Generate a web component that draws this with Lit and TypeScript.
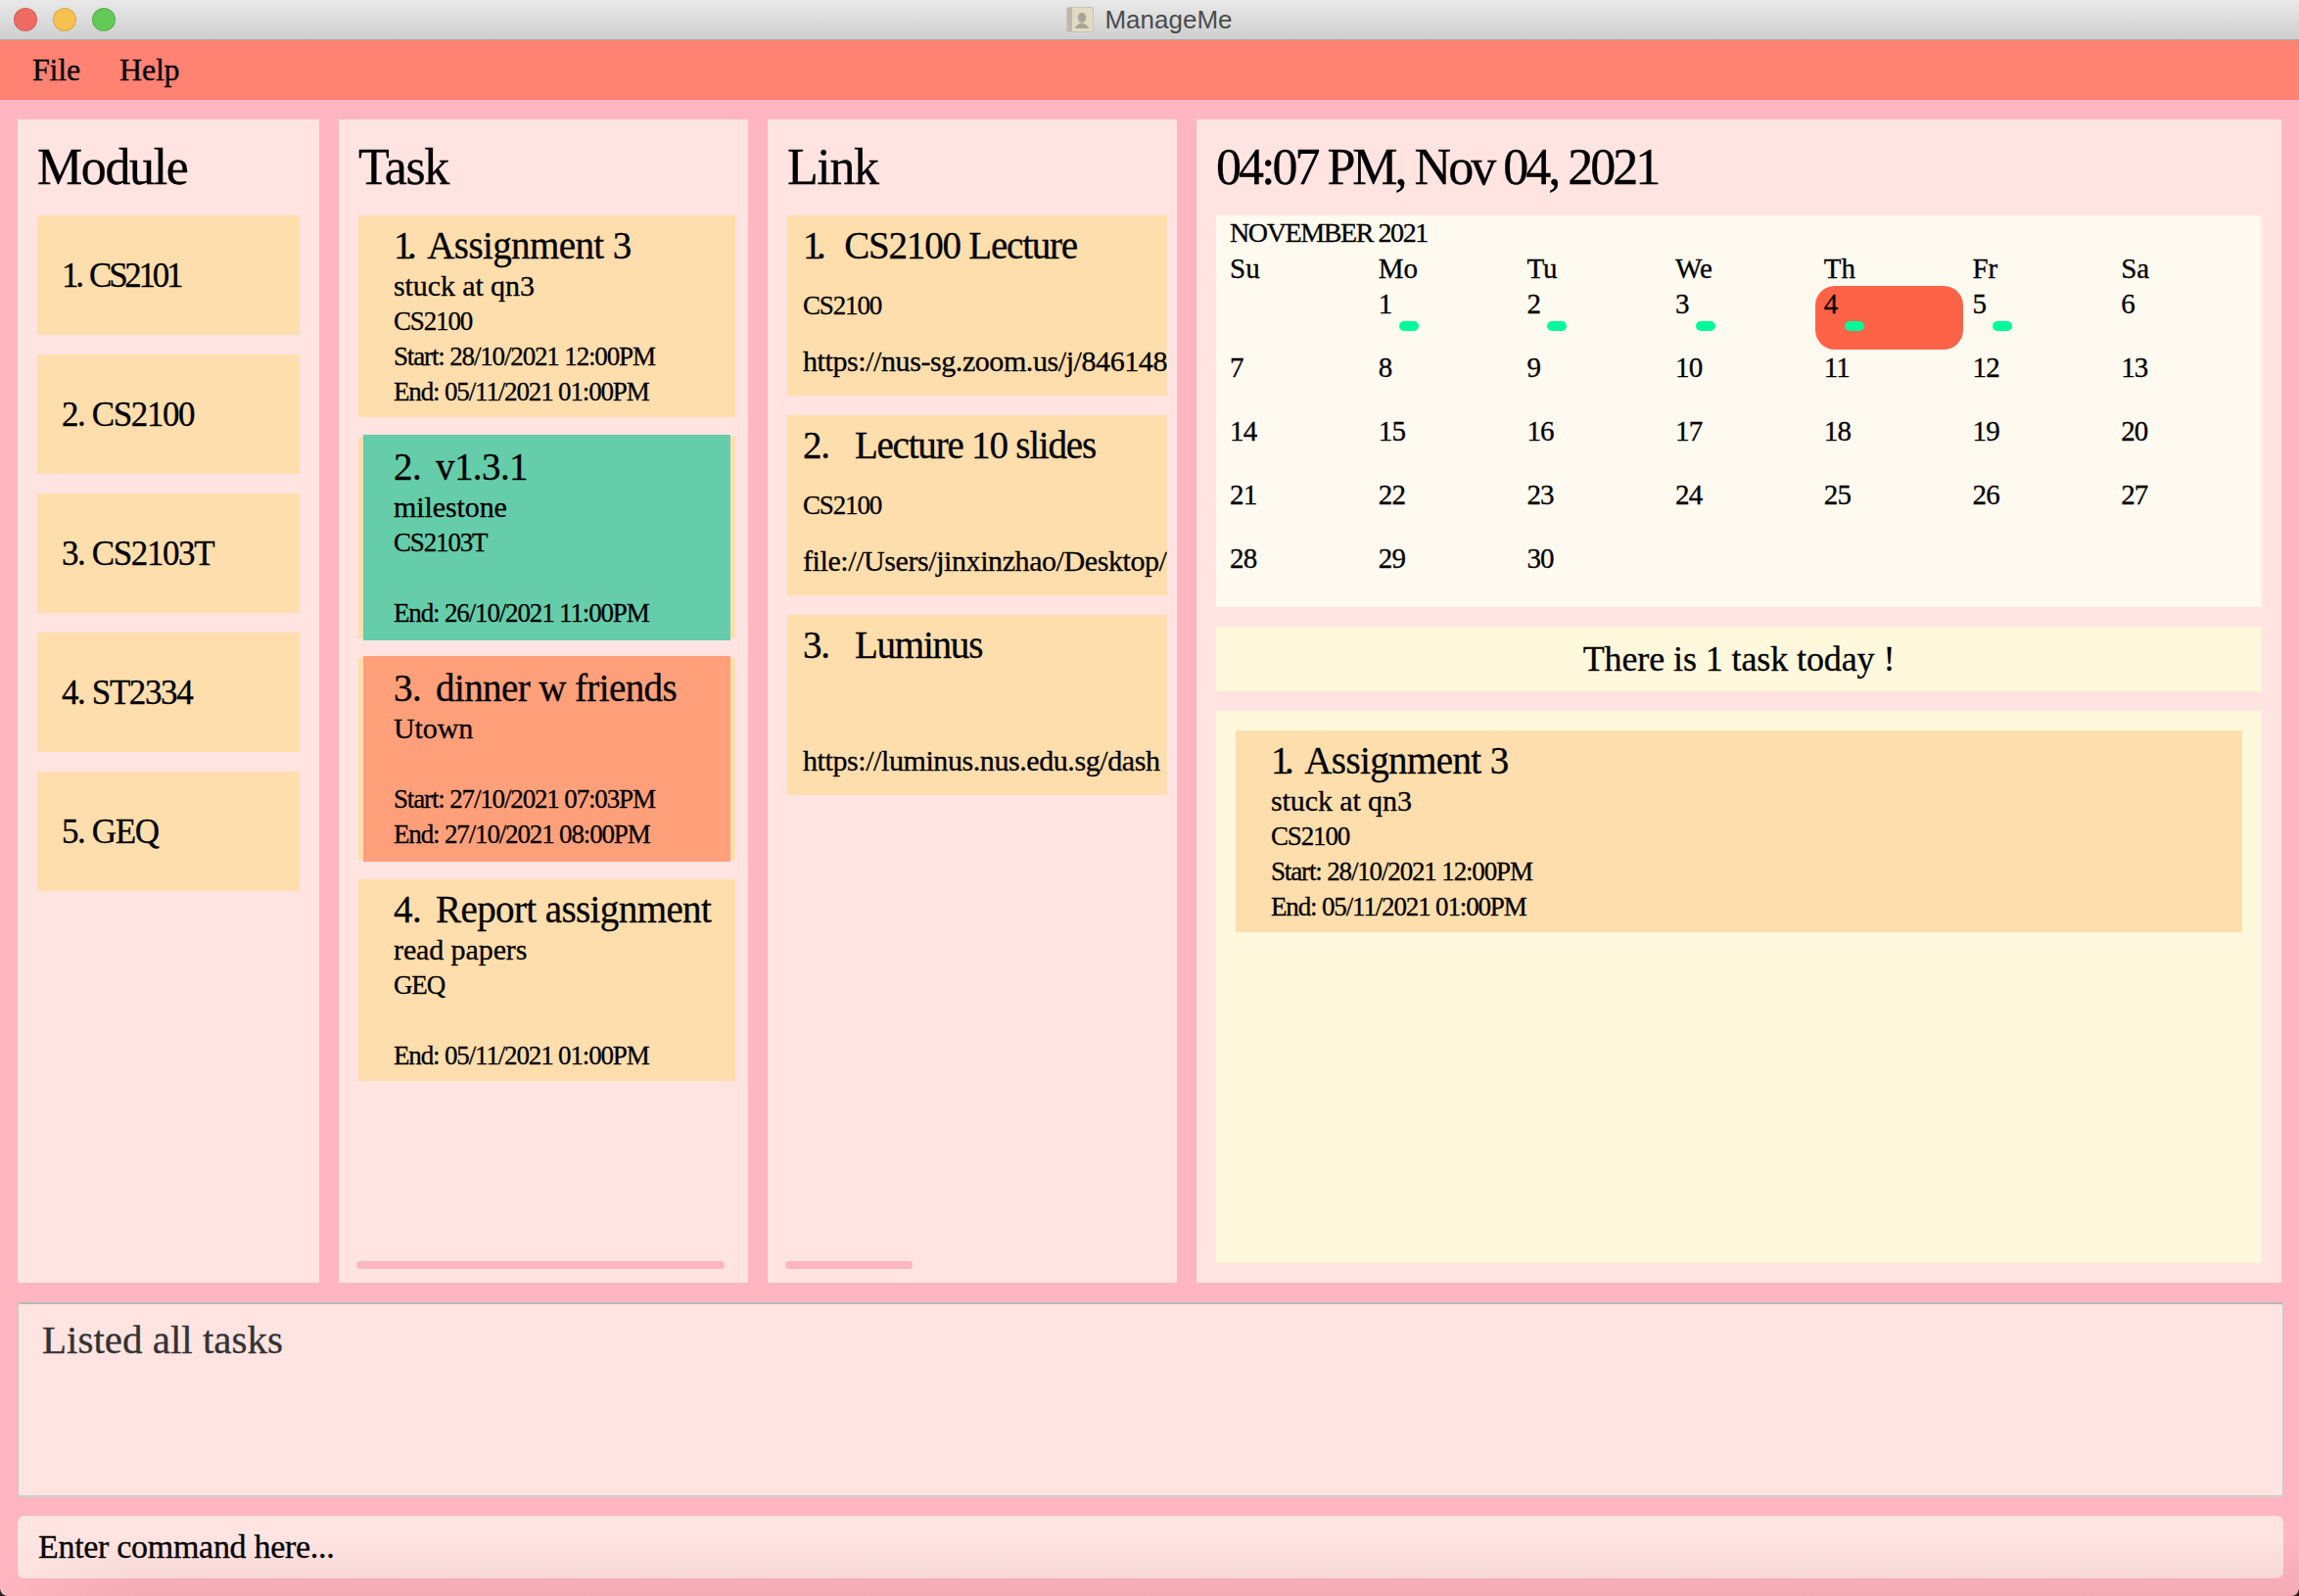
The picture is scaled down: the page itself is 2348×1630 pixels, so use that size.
import { LitElement, html, css, nothing } from 'lit';
import { customElement } from 'lit/decorators.js';

interface Task {
    name: string;
    desc: string;
    mod: string;
    start: string;
    end: string;
    state?: string;
}

const MODULES = ['CS2101', 'CS2100', 'CS2103T', 'ST2334', 'GEQ'];

const TASKS: Task[] = [
    { name: 'Assignment 3', desc: 'stuck at qn3', mod: 'CS2100', start: 'Start: 28/10/2021 12:00PM', end: 'End: 05/11/2021 01:00PM' },
    { name: 'v1.3.1', desc: 'milestone', mod: 'CS2103T', start: '', end: 'End: 26/10/2021 11:00PM', state: 'done' },
    { name: 'dinner w friends', desc: 'Utown', mod: '', start: 'Start: 27/10/2021 07:03PM', end: 'End: 27/10/2021 08:00PM', state: 'late' },
    { name: 'Report assignment', desc: 'read papers', mod: 'GEQ', start: '', end: 'End: 05/11/2021 01:00PM' },
];

const LINKS = [
    { name: 'CS2100 Lecture', mod: 'CS2100', url: 'https://nus-sg.zoom.us/j/846148' },
    { name: 'Lecture 10 slides', mod: 'CS2100', url: 'file://Users/jinxinzhao/Desktop/' },
    { name: 'Luminus', mod: '', url: 'https://luminus.nus.edu.sg/dash' },
];

const WEEKDAYS = ['Su', 'Mo', 'Tu', 'We', 'Th', 'Fr', 'Sa'];
const TASK_DAYS = [1, 2, 3, 4, 5];

@customElement('app-root')
export class AppRoot extends LitElement {

    static styles = css`
        :host {
            display: block;
            width: 2348px;
            height: 1630px;
            overflow: hidden;
            background: #222;
            font-family: "Liberation Serif", serif;
            color: #000;
            -webkit-text-stroke: 0.3px;
        }
        .window {
            position: relative;
            height: 1630px;
            display: flex;
            flex-direction: column;
            overflow: hidden;
            background: #FFB6C1;
            border-radius: 0 0 8px 8px;
        }

        .titlebar {
            height: 40px;
            flex: none;
            display: flex;
            align-items: center;
            justify-content: center;
            gap: 11px;
            position: relative;
            background: linear-gradient(#E9E9E9, #CFCFCF);
            border-bottom: 1px solid #ABABAB;
            font-family: "Liberation Sans", sans-serif;
            font-size: 26px;
            color: #4C4C4C;
            -webkit-text-stroke: 0;
        }
        .lights {
            position: absolute;
            left: 14px;
            top: 8px;
            display: flex;
            gap: 16px;
        }
        .light {
            width: 24px;
            height: 24px;
            box-sizing: border-box;
            border-radius: 50%;
            border: 1px solid rgba(0, 0, 0, 0.12);
        }
        .red { background: #EF6B62; }
        .yellow { background: #F8C04F; }
        .green { background: #63C957; }

        .menubar {
            height: 61px;
            flex: none;
            display: flex;
            align-items: center;
            gap: 40px;
            padding-left: 33px;
            background: #FF8273;
            font-size: 32px;
            letter-spacing: -0.2px;
        }

        .main {
            display: grid;
            grid-template-columns: 308px 418px 418px 1108px;
            gap: 20px;
            height: 1188px;
            flex: none;
            margin: 20px 0 20px 18px;
        }
        .panel {
            position: relative;
            background: #FFE4E1;
            overflow: hidden;
            padding-left: 20px;
        }
        h2 {
            margin: 21px 0 21px;
            height: 56px;
            font-size: 52px;
            line-height: 56px;
            font-weight: 400;
            letter-spacing: -1.4px;
            white-space: nowrap;
        }
        .time {
            letter-spacing: -3px;
        }

        .modules {
            display: flex;
            flex-direction: column;
            gap: 20px;
            padding-right: 20px;
        }
        .module {
            height: 122px;
            box-sizing: border-box;
            display: flex;
            align-items: center;
            padding: 2px 0 0 25px;
            background: #FFDEAD;
            font-size: 35px;
            letter-spacing: -1.4px;
        }
        .module.narrow {
            letter-spacing: -3.3px;
            word-spacing: 3px;
        }

        .tasks {
            display: flex;
            flex-direction: column;
            gap: 20px;
            width: 385px;
        }
        .card {
            position: relative;
            height: 206px;
            box-sizing: border-box;
            padding: 8px 0 0 36px;
            background: #FFDEAD;
            white-space: nowrap;
        }
        .card.done::before,
        .card.late::before {
            content: "";
            position: absolute;
            inset: -2px 5px;
            background: #66CDAA;
        }
        .card.late::before {
            background: #FFA07A;
        }
        .card > * {
            position: relative;
        }
        .title {
            display: flex;
            gap: 15px;
            height: 46px;
            font-size: 39px;
            line-height: 46px;
            letter-spacing: -0.6px;
        }
        .title .one {
            letter-spacing: -5.5px;
            margin-right: 1px;
        }
        .desc {
            height: 36px;
            font-size: 30px;
            line-height: 36px;
            letter-spacing: -0.1px;
        }
        .meta {
            height: 36px;
            font-size: 27px;
            line-height: 36px;
            letter-spacing: -1.15px;
        }

        .links {
            display: flex;
            flex-direction: column;
            gap: 20px;
            width: 388px;
        }
        .link {
            height: 184px;
            box-sizing: border-box;
            padding: 8px 0 0 16px;
            background: #FFDEAD;
            overflow: hidden;
            white-space: nowrap;
        }
        .link .title {
            gap: 26px;
            letter-spacing: -1.2px;
        }
        .link .title .one {
            margin-right: -2px;
        }
        .link .meta {
            margin-top: 19px;
            height: 38px;
            line-height: 38px;
            font-size: 30px;
            letter-spacing: -0.42px;
        }
        .link .meta.code {
            font-size: 27px;
            letter-spacing: -1.15px;
        }

        .side {
            padding: 0 20px;
        }
        .calendar {
            height: 400px;
            box-sizing: border-box;
            padding-left: 5px;
            background: #FFFAF0;
        }
        .month {
            height: 36px;
            padding-left: 9px;
            font-size: 28px;
            line-height: 36px;
            letter-spacing: -1.4px;
        }
        .days {
            display: grid;
            grid-template-columns: repeat(7, 151.7px);
            grid-template-rows: 36px;
            grid-auto-rows: 65px;
        }
        .weekday {
            padding-left: 9px;
            font-size: 29px;
            line-height: 36px;
        }
        .day {
            box-sizing: border-box;
            padding-left: 9px;
            font-size: 29px;
            line-height: 36px;
            letter-spacing: -0.8px;
        }
        .day.today {
            background: #FF6347;
            border-radius: 20px;
        }
        .dot {
            width: 20px;
            height: 10px;
            margin-left: 21px;
            border-radius: 5px;
            background: #00FA9A;
        }
        .count {
            height: 66px;
            margin-top: 20px;
            display: flex;
            align-items: center;
            justify-content: center;
            background: #FFF8DC;
            font-size: 36px;
            letter-spacing: -0.1px;
        }
        .today-list {
            height: 564px;
            box-sizing: border-box;
            margin-top: 20px;
            padding: 20px 20px 0;
            background: #FFF8DC;
        }

        .scroll {
            position: absolute;
            bottom: 14px;
            height: 8px;
            border-radius: 4px;
            background: #FFB6C1;
        }
        .scroll.task {
            left: 18px;
            width: 376px;
        }
        .scroll.link-bar {
            left: 18px;
            width: 130px;
        }

        .result {
            height: 199px;
            flex: none;
            box-sizing: border-box;
            margin: 0 16px 19px 18px;
            padding: 13px 24px;
            background: #FFE4E1;
            border: 1px solid #C9C9C9;
            border-top: 2px solid #B8B8B8;
            border-bottom: 2px solid #CFCFCF;
            border-radius: 3px;
            font-size: 41px;
            line-height: 46px;
            color: #333;
        }
        .command {
            height: 64px;
            flex: none;
            box-sizing: border-box;
            margin: 0 16px 0 18px;
            padding-left: 21px;
            display: flex;
            align-items: center;
            background: #FFE4E1;
            border-radius: 7px;
            font-size: 34px;
            letter-spacing: -0.3px;
        }
        .shade {
            position: absolute;
            left: 0;
            right: 0;
            bottom: 0;
            height: 60px;
            pointer-events: none;
            background: linear-gradient(rgba(120, 60, 60, 0), rgba(120, 60, 60, 0.09));
            -webkit-mask-image: linear-gradient(90deg, transparent, #000 140px);
            mask-image: linear-gradient(90deg, transparent, #000 140px);
        }
    `;

    render() {
        return html`
            <div class="window">
                <div class="titlebar">
                    <div class="lights">
                        <div class="light red"></div>
                        <div class="light yellow"></div>
                        <div class="light green"></div>
                    </div>
                    ${this._renderProxyIcon()}
                    <span>ManageMe</span>
                </div>
                <div class="menubar"><span>File</span><span>Help</span></div>
                <div class="main">
                    <section class="panel">
                        <h2>Module</h2>
                        <div class="modules">
                            ${MODULES.map((m, i) => html`<div class="module ${i === 0 ? 'narrow' : ''}"><span>${i + 1}. ${m}</span></div>`)}
                        </div>
                    </section>
                    <section class="panel">
                        <h2>Task</h2>
                        <div class="tasks">
                            ${TASKS.map((t, i) => this._renderTask(t, i))}
                        </div>
                        <div class="scroll task"></div>
                    </section>
                    <section class="panel">
                        <h2>Link</h2>
                        <div class="links">
                            ${LINKS.map((l, i) => html`
                                <div class="link">
                                    ${this._renderTitle(l.name, i)}
                                    <div class="meta code">${l.mod}</div>
                                    <div class="meta">${l.url}</div>
                                </div>`)}
                        </div>
                        <div class="scroll link-bar"></div>
                    </section>
                    <section class="panel side">
                        <h2 class="time">04:07 PM, Nov 04, 2021</h2>
                        ${this._renderCalendar()}
                        <div class="count">There is 1 task today !</div>
                        <div class="today-list">${this._renderTask(TASKS[0], 0)}</div>
                    </section>
                </div>
                <div class="result">Listed all tasks</div>
                <div class="command">Enter command here...</div>
                <div class="shade"></div>
            </div>
        `;
    }

    _renderTitle(name: string, index: number) {
        return html`
            <div class="title">
                <span class="${index === 0 ? 'one' : ''}">${index + 1}.</span><span>${name}</span>
            </div>
        `;
    }

    _renderTask(task: Task, index: number) {
        return html`
            <div class="card ${task.state ?? ''}">
                ${this._renderTitle(task.name, index)}
                <div class="desc">${task.desc}</div>
                <div class="meta">${task.mod}</div>
                <div class="meta">${task.start}</div>
                <div class="meta">${task.end}</div>
            </div>
        `;
    }

    _renderCalendar() {
        const days = Array.from({ length: 30 }, (_, i) => i + 1);
        return html`
            <div class="calendar">
                <div class="month">NOVEMBER 2021</div>
                <div class="days">
                    ${WEEKDAYS.map((d) => html`<div class="weekday">${d}</div>`)}
                    <div></div>
                    ${days.map((d) => html`
                        <div class="day ${d === 4 ? 'today' : ''}">
                            ${d}
                            ${TASK_DAYS.includes(d) ? html`<div class="dot"></div>` : nothing}
                        </div>`)}
                </div>
            </div>
        `;
    }

    _renderProxyIcon() {
        return html`
            <svg width="28" height="26" viewBox="0 0 28 26">
                <rect x="0.5" y="0.5" width="27" height="25" rx="1.5" fill="#E4DAC2" stroke="#C9C5B8"/>
                <rect x="1" y="1" width="5" height="24" fill="#BDB9AE"/>
                <ellipse cx="16" cy="11" rx="4.200" ry="5" fill="#A9A498"/>
                <path d="M9 22c0-3 4-3.500 5-5.500h4c1 2 5 2.500 5 5.500z" fill="#A9A498"/>
            </svg>
        `;
    }
}
